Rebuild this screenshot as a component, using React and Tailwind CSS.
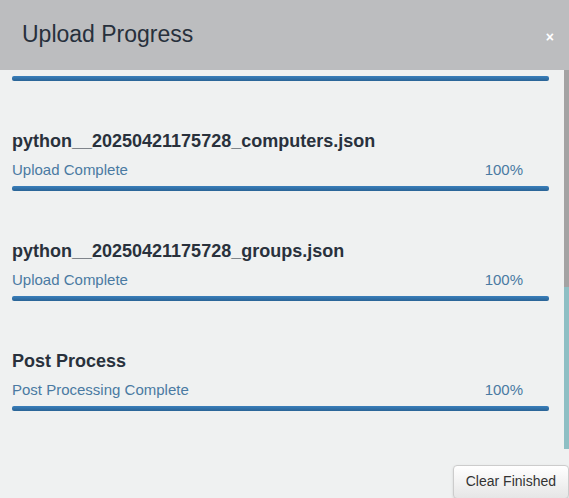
import React from 'react'

const items = [
    { name: 'python__20250421175728_computers.json', status: 'Upload Complete', pct: 100 },
    { name: 'python__20250421175728_groups.json', status: 'Upload Complete', pct: 100 },
    { name: 'Post Process', status: 'Post Processing Complete', pct: 100 },
]

const Bar = ({ pct }) => (
    <div className="h-[5px] w-full rounded-[2px] bg-[#dfe3e6] overflow-hidden">
        <div
            className="h-full bg-gradient-to-b from-[#3a7fbb] to-[#2a6496]"
            style={{ width: `${pct}%` }}
        />
    </div>
)

const UploadItem = ({ item }) => (
    <div className="mt-[50px]">
        <h4 className="text-[18px] leading-[20px] font-bold text-[#29313c]">{item.name}</h4>
        <div className="mt-[9px] flex justify-between pr-[26px] text-[15px] leading-[20px] text-[#4a7aa2]">
            <span>{item.status}</span>
            <span>{item.pct}%</span>
        </div>
        <div className="mt-[6px]">
            <Bar pct={item.pct} />
        </div>
    </div>
)

export default function App() {
    return (
        <div className="w-[569px] h-[498px] overflow-hidden bg-[#eff1f1] font-['Liberation_Sans',Arial,sans-serif]">
            <div className="h-[70px] bg-[#bcbdbf] flex items-center justify-between pl-[22px] pr-[16px]">
                <h3 className="text-[23px] leading-[28px] text-[#27303c] pb-[2px]">Upload Progress</h3>
                <button className="text-white text-[14px] font-bold leading-none mt-[3px] mr-[-1px]">×</button>
            </div>
            <div className="flex h-[380px]">
                <div className="flex-1 pl-[12px] pr-[15px] pt-[6px]">
                    <Bar pct={100} />
                    {items.map((item) => (
                        <UploadItem key={item.name} item={item} />
                    ))}
                </div>
                <div className="w-[5px] flex flex-col">
                    <div className="h-[217px] bg-[#a3a3a3]" />
                    <div className="h-[162px] bg-[#8ebfc4]" />
                </div>
            </div>
            <div className="flex justify-end pt-[15px]">
                <button className="h-[34px] px-[12px] pb-[1px] rounded-[4px] border border-[#cccccc] bg-gradient-to-b from-white to-[#e6e6e6] text-[14px] text-[#333] shadow-sm">
                    Clear Finished
                </button>
            </div>
        </div>
    )
}
